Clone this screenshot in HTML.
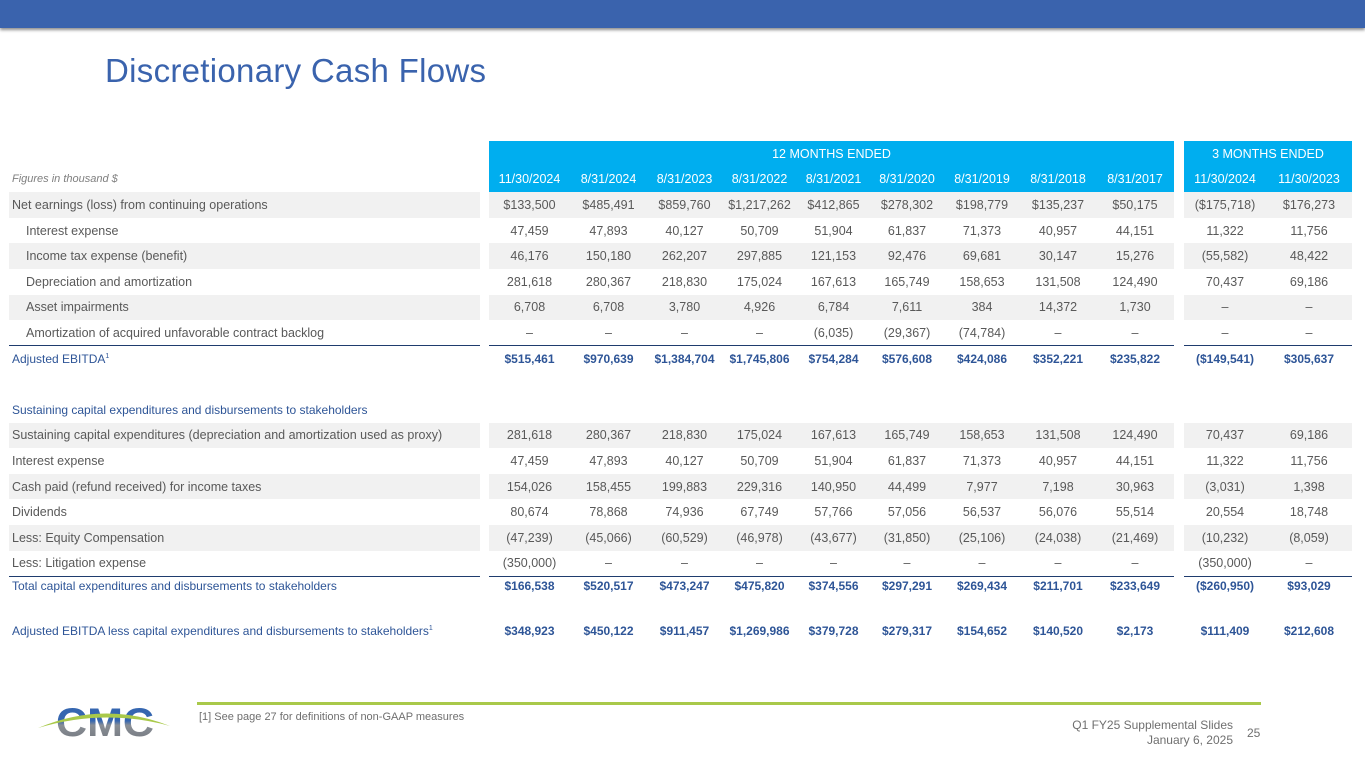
<!DOCTYPE html>
<html><head><meta charset="utf-8"><style>
*{margin:0;padding:0;box-sizing:border-box}
body{width:1365px;height:768px;background:#fff;position:relative;overflow:hidden;font-family:"Liberation Sans",Arial,sans-serif;color:#595959}
.bar{position:absolute;left:0;top:0;width:1365px;height:28px;background:#3a63ad;box-shadow:0 2px 3px rgba(0,0,0,.45)}
h1{position:absolute;left:105px;top:52px;font-weight:normal;font-size:33px;color:#3a63ad;letter-spacing:.3px}
table{position:absolute;left:9px;top:141px;border-collapse:collapse;table-layout:fixed;font-size:12.5px}
td{height:25.6px;text-align:center;white-space:nowrap;padding:0;vertical-align:middle}
td.l{text-align:left;padding-left:3px}
td.i{padding-left:17px}
tr.s td{background:#f1f1f1}
tr.s td.g,tr td.g{background:#fff}
tr.h td{color:#fff;background:#00aeef;font-size:12.5px}
tr.h td.l{background:#fff;color:#7f7f7f;font-style:italic;font-size:11px}
tr.h td.g{background:#fff}
tr.b td{color:#2e5597;font-weight:bold;font-size:12px}
tr.t td{border-top:1.5px solid #1f3c6e}
tr.sh td{color:#2e5597;font-size:12px}
tr.tt td{height:20px}
.gl{position:absolute;left:197px;top:702px;width:1064px;height:3px;background:#a9c94a}
.fn{position:absolute;left:199px;top:711px;font-size:11px;color:#6f6f6f}
.rt{position:absolute;right:132px;top:718px;font-size:12px;color:#6f6f6f;text-align:right;line-height:15px}
.pg{position:absolute;left:1247px;top:726px;font-size:12px;color:#6f6f6f}
</style></head><body>
<div class="bar"></div>
<h1>Discretionary Cash Flows</h1>
<table>
<colgroup><col style="width:471px"><col style="width:9px"><col style="width:81px"><col style="width:77px"><col style="width:75px"><col style="width:75px"><col style="width:73px"><col style="width:74px"><col style="width:76px"><col style="width:76px"><col style="width:78px"><col style="width:10px"><col style="width:82px"><col style="width:86px"></colgroup>
<tr class="h"><td class="l"></td><td class="g"></td><td colspan="9">12 MONTHS ENDED</td><td class="g"></td><td colspan="2">3 MONTHS ENDED</td></tr>
<tr class="h"><td class="l">Figures in thousand $</td><td class="g"></td><td>11/30/2024</td><td>8/31/2024</td><td>8/31/2023</td><td>8/31/2022</td><td>8/31/2021</td><td>8/31/2020</td><td>8/31/2019</td><td>8/31/2018</td><td>8/31/2017</td><td class="g"></td><td>11/30/2024</td><td>11/30/2023</td></tr>
<tr class="s"><td class="l">Net earnings (loss) from continuing operations</td><td class="g"></td><td>$133,500</td><td>$485,491</td><td>$859,760</td><td>$1,217,262</td><td>$412,865</td><td>$278,302</td><td>$198,779</td><td>$135,237</td><td>$50,175</td><td class="g"></td><td>($175,718)</td><td>$176,273</td></tr>
<tr><td class="l i">Interest expense</td><td class="g"></td><td>47,459</td><td>47,893</td><td>40,127</td><td>50,709</td><td>51,904</td><td>61,837</td><td>71,373</td><td>40,957</td><td>44,151</td><td class="g"></td><td>11,322</td><td>11,756</td></tr>
<tr class="s"><td class="l i">Income tax expense (benefit)</td><td class="g"></td><td>46,176</td><td>150,180</td><td>262,207</td><td>297,885</td><td>121,153</td><td>92,476</td><td>69,681</td><td>30,147</td><td>15,276</td><td class="g"></td><td>(55,582)</td><td>48,422</td></tr>
<tr><td class="l i">Depreciation and amortization</td><td class="g"></td><td>281,618</td><td>280,367</td><td>218,830</td><td>175,024</td><td>167,613</td><td>165,749</td><td>158,653</td><td>131,508</td><td>124,490</td><td class="g"></td><td>70,437</td><td>69,186</td></tr>
<tr class="s"><td class="l i">Asset impairments</td><td class="g"></td><td>6,708</td><td>6,708</td><td>3,780</td><td>4,926</td><td>6,784</td><td>7,611</td><td>384</td><td>14,372</td><td>1,730</td><td class="g"></td><td>–</td><td>–</td></tr>
<tr><td class="l i">Amortization of acquired unfavorable contract backlog</td><td class="g"></td><td>–</td><td>–</td><td>–</td><td>–</td><td>(6,035)</td><td>(29,367)</td><td>(74,784)</td><td>–</td><td>–</td><td class="g"></td><td>–</td><td>–</td></tr>
<tr class="b t"><td class="l" style="font-weight:normal">Adjusted EBITDA<sup style="font-size:7px">1</sup></td><td class="g" style="border-top:none"></td><td>$515,461</td><td>$970,639</td><td>$1,384,704</td><td>$1,745,806</td><td>$754,284</td><td>$576,608</td><td>$424,086</td><td>$352,221</td><td>$235,822</td><td class="g" style="border-top:none"></td><td>($149,541)</td><td>$305,637</td></tr>
<tr><td class="l" colspan="14"></td></tr>
<tr class="sh"><td class="l">Sustaining capital expenditures and disbursements to stakeholders</td><td colspan="13"></td></tr>
<tr class="s"><td class="l">Sustaining capital expenditures (depreciation and amortization used as proxy)</td><td class="g"></td><td>281,618</td><td>280,367</td><td>218,830</td><td>175,024</td><td>167,613</td><td>165,749</td><td>158,653</td><td>131,508</td><td>124,490</td><td class="g"></td><td>70,437</td><td>69,186</td></tr>
<tr><td class="l">Interest expense</td><td class="g"></td><td>47,459</td><td>47,893</td><td>40,127</td><td>50,709</td><td>51,904</td><td>61,837</td><td>71,373</td><td>40,957</td><td>44,151</td><td class="g"></td><td>11,322</td><td>11,756</td></tr>
<tr class="s"><td class="l">Cash paid (refund received) for income taxes</td><td class="g"></td><td>154,026</td><td>158,455</td><td>199,883</td><td>229,316</td><td>140,950</td><td>44,499</td><td>7,977</td><td>7,198</td><td>30,963</td><td class="g"></td><td>(3,031)</td><td>1,398</td></tr>
<tr><td class="l">Dividends</td><td class="g"></td><td>80,674</td><td>78,868</td><td>74,936</td><td>67,749</td><td>57,766</td><td>57,056</td><td>56,537</td><td>56,076</td><td>55,514</td><td class="g"></td><td>20,554</td><td>18,748</td></tr>
<tr class="s"><td class="l">Less: Equity Compensation</td><td class="g"></td><td>(47,239)</td><td>(45,066)</td><td>(60,529)</td><td>(46,978)</td><td>(43,677)</td><td>(31,850)</td><td>(25,106)</td><td>(24,038)</td><td>(21,469)</td><td class="g"></td><td>(10,232)</td><td>(8,059)</td></tr>
<tr><td class="l">Less: Litigation expense</td><td class="g"></td><td>(350,000)</td><td>–</td><td>–</td><td>–</td><td>–</td><td>–</td><td>–</td><td>–</td><td>–</td><td class="g"></td><td>(350,000)</td><td>–</td></tr>
<tr class="b t tt"><td class="l" style="font-weight:normal">Total capital expenditures and disbursements to stakeholders</td><td class="g" style="border-top:none"></td><td>$166,538</td><td>$520,517</td><td>$473,247</td><td>$475,820</td><td>$374,556</td><td>$297,291</td><td>$269,434</td><td>$211,701</td><td>$233,649</td><td class="g" style="border-top:none"></td><td>($260,950)</td><td>$93,029</td></tr>
<tr><td colspan="14" style="height:22px"></td></tr>
<tr class="b"><td class="l" style="font-weight:normal">Adjusted EBITDA less capital expenditures and disbursements to stakeholders<sup style="font-size:7px">1</sup></td><td class="g"></td><td>$348,923</td><td>$450,122</td><td>$911,457</td><td>$1,269,986</td><td>$379,728</td><td>$279,317</td><td>$154,652</td><td>$140,520</td><td>$2,173</td><td class="g"></td><td>$111,409</td><td>$212,608</td></tr>
</table>
<svg style="position:absolute;left:36px;top:696px" width="140" height="48" viewBox="0 0 140 48">
<defs><linearGradient id="gg" x1="0" y1="0" x2="0" y2="1"><stop offset="0" stop-color="#3566b0"/><stop offset=".45" stop-color="#3566b0"/><stop offset=".55" stop-color="#8a8f96"/><stop offset="1" stop-color="#6e737a"/></linearGradient></defs>
<text x="20" y="40" font-family="Liberation Sans" font-weight="bold" font-size="40" fill="url(#gg)" textLength="98" lengthAdjust="spacingAndGlyphs">CMC</text>
<path d="M2 32 Q68 4 134 30 Q68 12 2 32Z" fill="#a9c94a"/>
</svg>
<div class="gl"></div>
<div class="fn">[1] See page 27 for definitions of non-GAAP measures</div>
<div class="rt">Q1 FY25 Supplemental Slides<br>January 6, 2025</div>
<div class="pg">25</div>
</body></html>
